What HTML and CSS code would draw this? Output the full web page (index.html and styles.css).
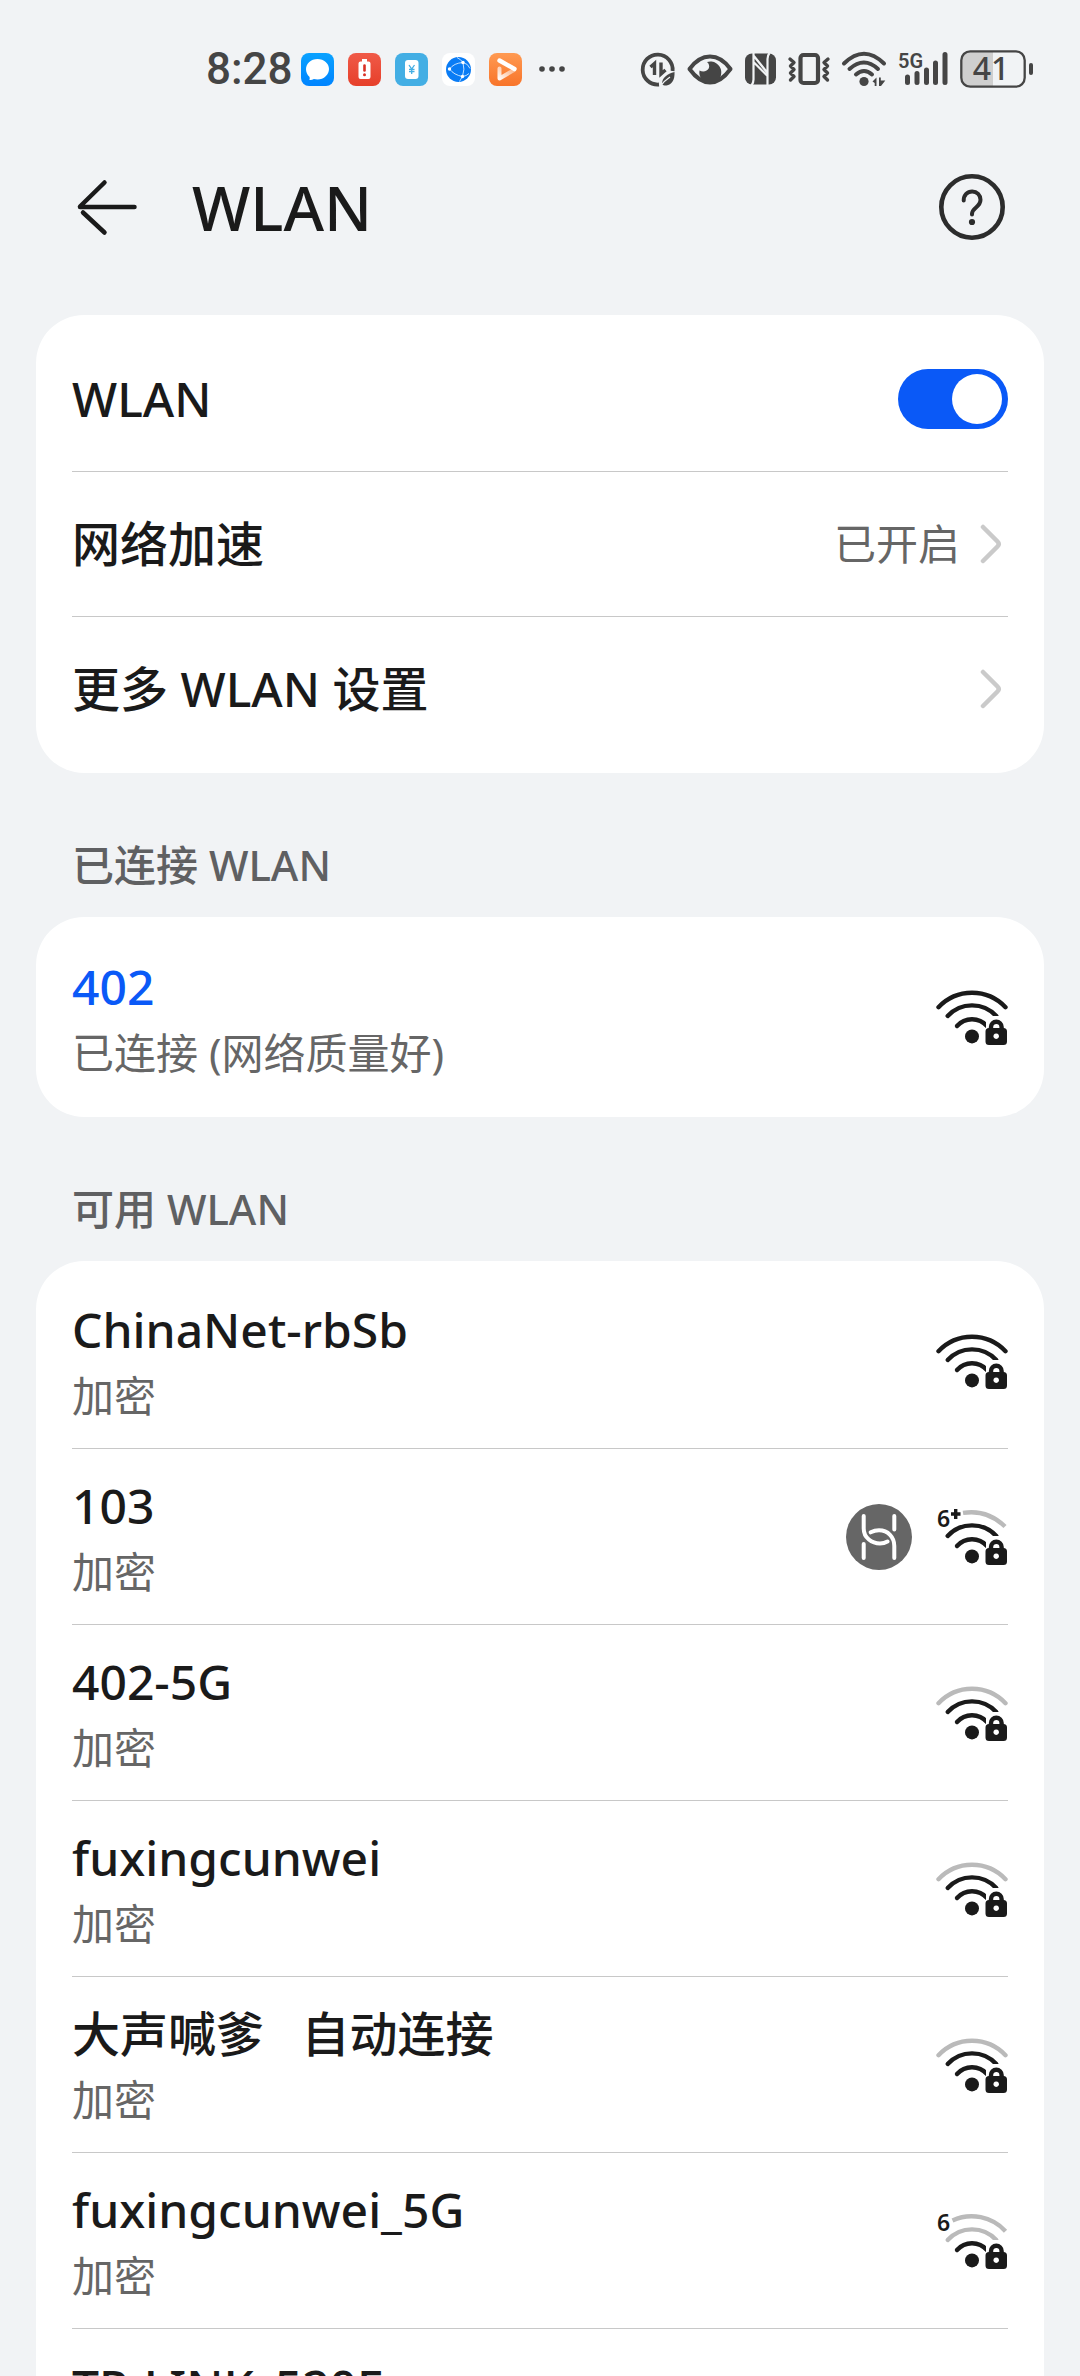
FILE: index.html
```html
<!DOCTYPE html>
<html lang="zh-CN">
<head>
<meta charset="utf-8">
<meta name="viewport" content="width=device-width, initial-scale=1">
<title>WLAN</title>
<link rel="stylesheet" href="styles.css">
</head>
<body>
<svg class="defs" aria-hidden="true">
  <defs>
    <linearGradient id="g-blue" x1="0" y1="0" x2="0" y2="1"><stop offset="0" stop-color="#0aa2ff"/><stop offset="1" stop-color="#0084ff"/></linearGradient>
    <linearGradient id="g-red" x1="0" y1="0" x2="0" y2="1"><stop offset="0" stop-color="#f05a48"/><stop offset="1" stop-color="#e63f2a"/></linearGradient>
    <linearGradient id="g-orange" x1="0" y1="0" x2="0" y2="1"><stop offset="0" stop-color="#ff9a52"/><stop offset="1" stop-color="#f8742a"/></linearGradient>
    <linearGradient id="g-fade" x1="0" y1="1" x2="1" y2="0"><stop offset="0" stop-color="#fff" stop-opacity=".95"/><stop offset="1" stop-color="#fff" stop-opacity=".35"/></linearGradient>
    <symbol id="lock" viewBox="0 0 72 58">
      <rect class="halo" x="50" y="28" width="22" height="32" rx="5"/>
      <path class="line" d="M55 42v-3a5.3 5.3 0 0 1 10.6 0v3"/>
      <path class="solid" fill-rule="evenodd" d="M53 40h14.500a3.500 3.500 0 0 1 3.500 3.500v10a3.500 3.500 0 0 1-3.500 3.500H53a3.500 3.500 0 0 1-3.500-3.500v-10A3.500 3.500 0 0 1 53 40zM60.200 45.400a2.800 2.800 0 1 0 .01 0z"/>
    </symbol>
    <symbol id="arc-outer" viewBox="0 0 72 58"><path class="line" d="M2.500 19.200A46 46 0 0 1 69.500 19.200"/></symbol>
    <symbol id="arc-middle" viewBox="0 0 72 58"><path class="line" d="M11.700 28A33 33 0 0 1 60.300 28"/></symbol>
    <symbol id="arc-inner" viewBox="0 0 72 58"><path class="line" d="M21 38A20 20 0 0 1 51 38"/><circle class="solid" cx="36" cy="48.400" r="7"/></symbol>
    <symbol id="chevron" viewBox="0 0 36 40"><path d="M11 3l14.500 14.500q2.500 2.500 0 5L11 37" fill="none" stroke="#cacaca" stroke-width="4.500" stroke-linecap="round"/></symbol>
  </defs>
</svg>

<div class="screen">
  <header class="status">
    <div class="status-left">
      <time class="clock">8:28</time>
      <div class="apps">
        <svg class="app" viewBox="0 0 33 33"><rect width="33" height="33" rx="8" fill="url(#g-blue)"/><path d="M16.500 6C23 6 28 10.500 28 16s-5 10.500-11.500 10.500c-1.200 0-2.600-.2-3.600-.5-1.500 1-3 1.300-4.600 1 .6-1 .5-2.300.1-3.200C6.200 21.800 5 19.200 5 16.300 5 10.500 10 6 16.500 6z" fill="#fff"/></svg>
        <svg class="app" viewBox="0 0 33 33"><rect width="33" height="33" rx="8" fill="url(#g-red)"/><path d="M14 6h5v2.500h1.500a2 2 0 0 1 2 2V24a2 2 0 0 1-2 2h-8a2 2 0 0 1-2-2V10.500a2 2 0 0 1 2-2H14z" fill="#fff"/><path d="M16.500 12.500v5" stroke="#d93025" stroke-width="2.600" stroke-linecap="round"/><circle cx="16.500" cy="21.700" r="1.500" fill="#d93025"/></svg>
        <svg class="app" viewBox="0 0 33 33"><rect width="33" height="33" rx="8" fill="#43aee4"/><rect x="10" y="7" width="13.500" height="19" rx="3" fill="#fff"/><path d="M14 12l2.700 4L19.500 12M16.700 16v5M14 16.500h5.500M14 18.700h5.500" stroke="#43aee4" stroke-width="1.300" fill="none"/></svg>
        <svg class="app" viewBox="0 0 33 33"><rect width="33" height="33" rx="8" fill="#fff"/><circle cx="16.500" cy="16.500" r="12.500" fill="#0a7cf5"/><path d="M7.500 16Q12 10 21 9.500Q23 16 20.500 23.500Q12 22 7.500 16M15 4.500q4 2 6 5q5 1 7 6M20.500 23.500q-2 3-3 5M20.500 23.500q4-.5 6.500-3" stroke="#d6eaff" stroke-width=".9" fill="none"/><circle cx="7.500" cy="16" r="1.700" fill="#fff"/><circle cx="21" cy="9.500" r="1.700" fill="#fff"/><circle cx="20.500" cy="23.500" r="1.700" fill="#fff"/></svg>
        <svg class="app" viewBox="0 0 33 33"><rect width="33" height="33" rx="8" fill="url(#g-orange)"/><path d="M10.500 15.500V25.500L25 17" stroke="url(#g-fade)" stroke-width="4" fill="none" stroke-linecap="round" stroke-linejoin="round"/><path d="M10.500 7.500L25.500 16" stroke="#fff" stroke-width="4.400" stroke-linecap="round"/></svg>
      </div>
      <svg class="more" viewBox="0 0 28 8" fill="#454545"><circle cx="4" cy="4" r="2.800"/><circle cx="14" cy="4" r="2.800"/><circle cx="24" cy="4" r="2.800"/></svg>
    </div>
    <div class="status-right">
      <svg width="34" height="38" viewBox="0 0 34 38" fill="none" stroke="#454545"><path d="M18 34.500A15 15 0 1 1 31.600 21" stroke-width="3.800"/><path d="M9.500 17l4-3.500v11.500M20 12.500v11.500l4.500-4" stroke-width="3.400"/><path d="M33.500 22c.5 8-3 13-8 13.500-2 .2-3.500-.3-4.500-1.300 0-6.500 5-10.200 12.500-12.200z" fill="#454545" stroke="none"/><path d="M19.500 36c3-4 5-6 9.500-9" stroke="#f1f3f5" stroke-width="1.300"/></svg>
      <svg width="46" height="38" viewBox="0 0 46 38"><path d="M2.500 19C9 10 15.500 6.500 23 6.500S37 10 43.500 19C37 28 30.500 32.500 23 32.500S9 28 2.500 19z" fill="none" stroke="#454545" stroke-width="4" stroke-linejoin="round"/><path d="M20 12a11 11 0 1 1-7.500 8.500c3.500 2 8 .8 9.300-2.200.9-2.400.2-4.600-1.800-6.300z" fill="#454545"/></svg>
      <svg width="31" height="38" viewBox="0 0 31 38"><rect y="3.500" width="31" height="31" rx="7" fill="#454545"/><path d="M8.500 2v27.500q0 3.500-2 6M8.500 12l14 14M8.500 5.500l14 17.500M22.500 36V9q0-3.500 2-6" stroke="#f1f3f5" stroke-width="2.200" fill="none"/></svg>
      <svg width="42" height="38" viewBox="0 0 42 38" fill="none" stroke="#454545"><rect x="12.500" y="5" width="17.500" height="28" rx="3" stroke-width="4.200"/><path d="M2 9l4 3.500-3.500 3.500L6 19.500 2.500 23 6 26.500 2.500 30M40 9l-4 3.500 3.500 3.500L36 19.500l3.500 3.500-3.500 3.500 3.500 3.500" stroke-width="3.400" stroke-linecap="round" stroke-linejoin="round"/></svg>
      <svg width="44" height="38" viewBox="0 0 44 38" fill="none" stroke="#454545" stroke-width="4" stroke-linecap="round"><path d="M2 13.500Q22-6 42 13.500M7.500 19Q22 6 36 19M14 24.500Q22 17.500 30 24.500"/><circle cx="22" cy="31.500" r="4.600" fill="#454545" stroke="none"/><path d="M30.500 31.500l4-4v8.500h-1.800v-3zM37 27.500h1.800v3h4.500L39 36h-2z" fill="#454545" stroke="none"/></svg>
      <svg width="50" height="38" viewBox="0 0 50 38"><text class="gen" x="0" y="18">5G</text><path d="M9.500 27v5.500M19 23.500v9M28.500 20v12.500M37.500 13v19.500M47 4.500v28" stroke="#454545" stroke-width="5" stroke-linecap="round"/></svg>
      <svg width="74" height="38" viewBox="0 0 74 38"><path d="M10 2h23v34H10a8 8 0 0 1-8-8V10a8 8 0 0 1 8-8z" fill="#cfcfcf"/><rect x="1.300" y="1.300" width="63.400" height="35.400" rx="9" fill="none" stroke="#454545" stroke-width="2.300"/><rect x="69" y="13" width="4" height="12" rx="2" fill="#454545"/><text class="charge" x="31" y="30">41</text></svg>
    </div>
  </header>

  <nav class="bar">
    <button class="icon-button" type="button" aria-label="返回"><svg width="66" height="66" viewBox="0 0 66 66" fill="none" stroke="#1a1a1a" stroke-width="4.500" stroke-linecap="round"><path d="M8 33H62.500M8 32.500L32.500 8.500M11 38.500L32.500 58.500"/></svg></button>
    <h1 class="heading">WLAN</h1>
    <button class="icon-button" type="button" aria-label="帮助"><svg width="66" height="66" viewBox="0 0 66 66" fill="none" stroke="#2c2c2c" stroke-linecap="round"><circle cx="33" cy="33" r="30.700" stroke-width="4.600"/><path d="M24.700 26.500c0-5.500 3.700-9 8.500-9s8.300 3.500 8.300 8.300c0 7.700-8.500 7.500-8.500 14.200v.5" stroke-width="4"/><circle cx="33" cy="48" r="3.100" fill="#2c2c2c" stroke="none"/></svg></button>
  </nav>

  <main class="content">
    <section class="card">
      <div class="row">
        <label class="name" for="wlan">WLAN</label>
        <input class="switch" id="wlan" type="checkbox" role="switch" checked>
      </div>
      <a class="row" href="#speed">
        <span class="name">网络加速</span>
        <span class="value">已开启</span>
        <svg class="chevron" aria-hidden="true"><use href="#chevron"/></svg>
      </a>
      <a class="row" href="#settings">
        <span class="name">更多 WLAN 设置</span>
        <svg class="chevron" aria-hidden="true"><use href="#chevron"/></svg>
      </a>
    </section>

    <h2 class="section">已连接 WLAN</h2>
    <section class="card">
      <button class="row network" type="button">
        <span class="text"><span class="name active">402</span><span class="note">已连接 (网络质量好)</span></span>
        <svg class="wifi" viewBox="0 0 72 58"><use href="#arc-outer"/><use href="#arc-middle"/><use href="#arc-inner"/><use href="#lock"/></svg>
      </button>
    </section>

    <h2 class="section">可用 WLAN</h2>
    <section class="card">
      <button class="row network" type="button">
        <span class="text"><span class="name">ChinaNet-rbSb</span><span class="note">加密</span></span>
        <svg class="wifi" viewBox="0 0 72 58"><use href="#arc-outer"/><use href="#arc-middle"/><use href="#arc-inner"/><use href="#lock"/></svg>
      </button>
      <button class="row network" type="button">
        <span class="text"><span class="name">103</span><span class="note">加密</span></span>
        <svg class="link" viewBox="0 0 66 66"><circle cx="33" cy="33" r="33" fill="#666"/><path d="M17.700 12v12.500C17.700 34 26 39.500 34 39.500q4 0 7.500-2M24.700 28.300q4-2 8.300-2C42 26.300 48.300 33 48.300 42v12M48.300 12v13.500M17.700 40v14" fill="none" stroke="#fff" stroke-width="4" stroke-linecap="round"/></svg>
        <svg class="wifi" viewBox="0 0 72 58"><path class="line weak cut" d="M27 4.900Q51 1 69 18.500"/><use href="#arc-middle"/><use href="#arc-inner"/><use href="#lock"/><text class="gen-wifi" x="1" y="19">6</text><path class="plus" d="M15 6h9.500M19.700 1v10"/></svg>
      </button>
      <button class="row network" type="button">
        <span class="text"><span class="name">402-5G</span><span class="note">加密</span></span>
        <svg class="wifi" viewBox="0 0 72 58"><use class="weak" href="#arc-outer"/><use href="#arc-middle"/><use href="#arc-inner"/><use href="#lock"/></svg>
      </button>
      <button class="row network" type="button">
        <span class="text"><span class="name">fuxingcunwei</span><span class="note">加密</span></span>
        <svg class="wifi" viewBox="0 0 72 58"><use class="weak" href="#arc-outer"/><use href="#arc-middle"/><use href="#arc-inner"/><use href="#lock"/></svg>
      </button>
      <button class="row network" type="button">
        <span class="text"><span class="name">大声喊爹   自动连接</span><span class="note">加密</span></span>
        <svg class="wifi" viewBox="0 0 72 58"><use class="weak" href="#arc-outer"/><use href="#arc-middle"/><use href="#arc-inner"/><use href="#lock"/></svg>
      </button>
      <button class="row network" type="button">
        <span class="text"><span class="name">fuxingcunwei_5G</span><span class="note">加密</span></span>
        <svg class="wifi" viewBox="0 0 72 58"><path class="line weak cut" d="M16.500 8.400A46 46 0 0 1 69.500 19.200"/><use class="weak" href="#arc-middle"/><use href="#arc-inner"/><use href="#lock"/><text class="gen-wifi" x="1" y="19">6</text></svg>
      </button>
      <button class="row network" type="button">
        <span class="text"><span class="name">TP-LINK_520E</span><span class="note">加密</span></span>
        <svg class="wifi" viewBox="0 0 72 58"><use class="weak" href="#arc-outer"/><use href="#arc-middle"/><use href="#arc-inner"/><use href="#lock"/></svg>
      </button>
    </section>
  </main>
</div>
</body>
</html>
```
FILE: styles.css
```css
* { box-sizing: border-box; }

body {
  margin: 0;
  background: #f1f3f5;
  color: #1a1a1a;
  font-family: "Noto Sans", "Noto Sans CJK SC", sans-serif;
}

button, a {
  font: inherit;
  color: inherit;
  text-decoration: none;
}

svg { display: block; flex: none; overflow: visible; }

.defs { position: absolute; width: 0; height: 0; }

.screen {
  display: flex;
  flex-direction: column;
  height: 100vh;
}

/* Status bar */
.status {
  flex: none;
  display: flex;
  justify-content: space-between;
  align-items: center;
  height: 138px;
  padding: 0 46px 0 206px;
}

.status-left, .status-right, .apps { display: flex; align-items: center; }
.status-left { gap: 8px; }
.status-right { gap: 12px; }
.apps { gap: 14px; }

.clock {
  color: #454545;
  font-size: 44px;
  line-height: 60px;
  font-weight: 500;
  font-family: Roboto, sans-serif;
}

.app { width: 33px; height: 33px; }
.more { width: 28px; height: 8px; margin-left: 8px; }

.gen { font: 600 20px Roboto, sans-serif; fill: #454545; }
.charge { font: 500 32px "Noto Sans", sans-serif; fill: #454545; text-anchor: middle; }

/* Title bar */
.bar {
  flex: none;
  display: flex;
  align-items: center;
  height: 138px;
  padding: 0 75px 0 72px;
}

.icon-button {
  flex: none;
  padding: 0;
  border: 0;
  background: none;
}

.heading {
  flex: 1;
  margin: 0 0 0 54px;
  font-size: 62px;
  line-height: 84px;
  font-weight: 500;
}

/* Lists */
.content {
  flex: 1;
  min-height: 0;
  overflow-y: auto;
  scrollbar-width: none;
  padding: 39px 36px 0;
}

.card {
  padding: 12px 36px;
  border-radius: 48px;
  background: #fff;
}

.row {
  display: flex;
  align-items: center;
  width: 100%;
  min-height: 145px;
  padding: 0;
  border: 0;
  border-bottom: 1px solid #c8c8c8;
  background: none;
  text-align: left;
}

.row:last-child { border-bottom: 0; min-height: 144px; }
.row.network { min-height: 176px; gap: 24px; }

.name {
  flex: 1;
  font-size: 48px;
  line-height: 64px;
  font-weight: 500;
  white-space: pre;
}

.active { color: #0a59f7; }

.text { flex: 1; display: flex; flex-direction: column; gap: 4px; padding-top: 3px; }

.note, .value {
  color: #666;
  font-size: 42px;
  line-height: 60px;
}

.chevron { width: 36px; height: 40px; margin-left: 12px; }

.section {
  display: flex;
  align-items: flex-end;
  height: 144px;
  margin: 0;
  padding: 0 36px 20px;
  color: #5f6062;
  font-size: 42px;
  line-height: 64px;
  font-weight: 500;
}

.switch {
  appearance: none;
  flex: none;
  width: 110px;
  height: 60px;
  margin: 0;
  padding: 5px 6px;
  border-radius: 30px;
  background: #c8c8c8;
  display: flex;
}

.switch::before {
  content: "";
  width: 50px;
  height: 50px;
  border-radius: 50%;
  background: #fff;
}

.switch:checked { background: #0a59f7; justify-content: flex-end; }

/* Signal icons */
.wifi { width: 72px; height: 58px; color: #1a1a1a; }
.link { width: 66px; height: 66px; }
.line { fill: none; stroke: currentColor; stroke-width: 4.4; stroke-linecap: round; }
.solid { fill: currentColor; }
.halo { fill: #fff; }
.weak { color: #bababa; }
.cut { stroke-linecap: butt; }
.plus { fill: none; stroke: #1a1a1a; stroke-width: 3.4; }
.gen-wifi { font: 600 23px "Noto Sans", sans-serif; fill: #1a1a1a; }
```
